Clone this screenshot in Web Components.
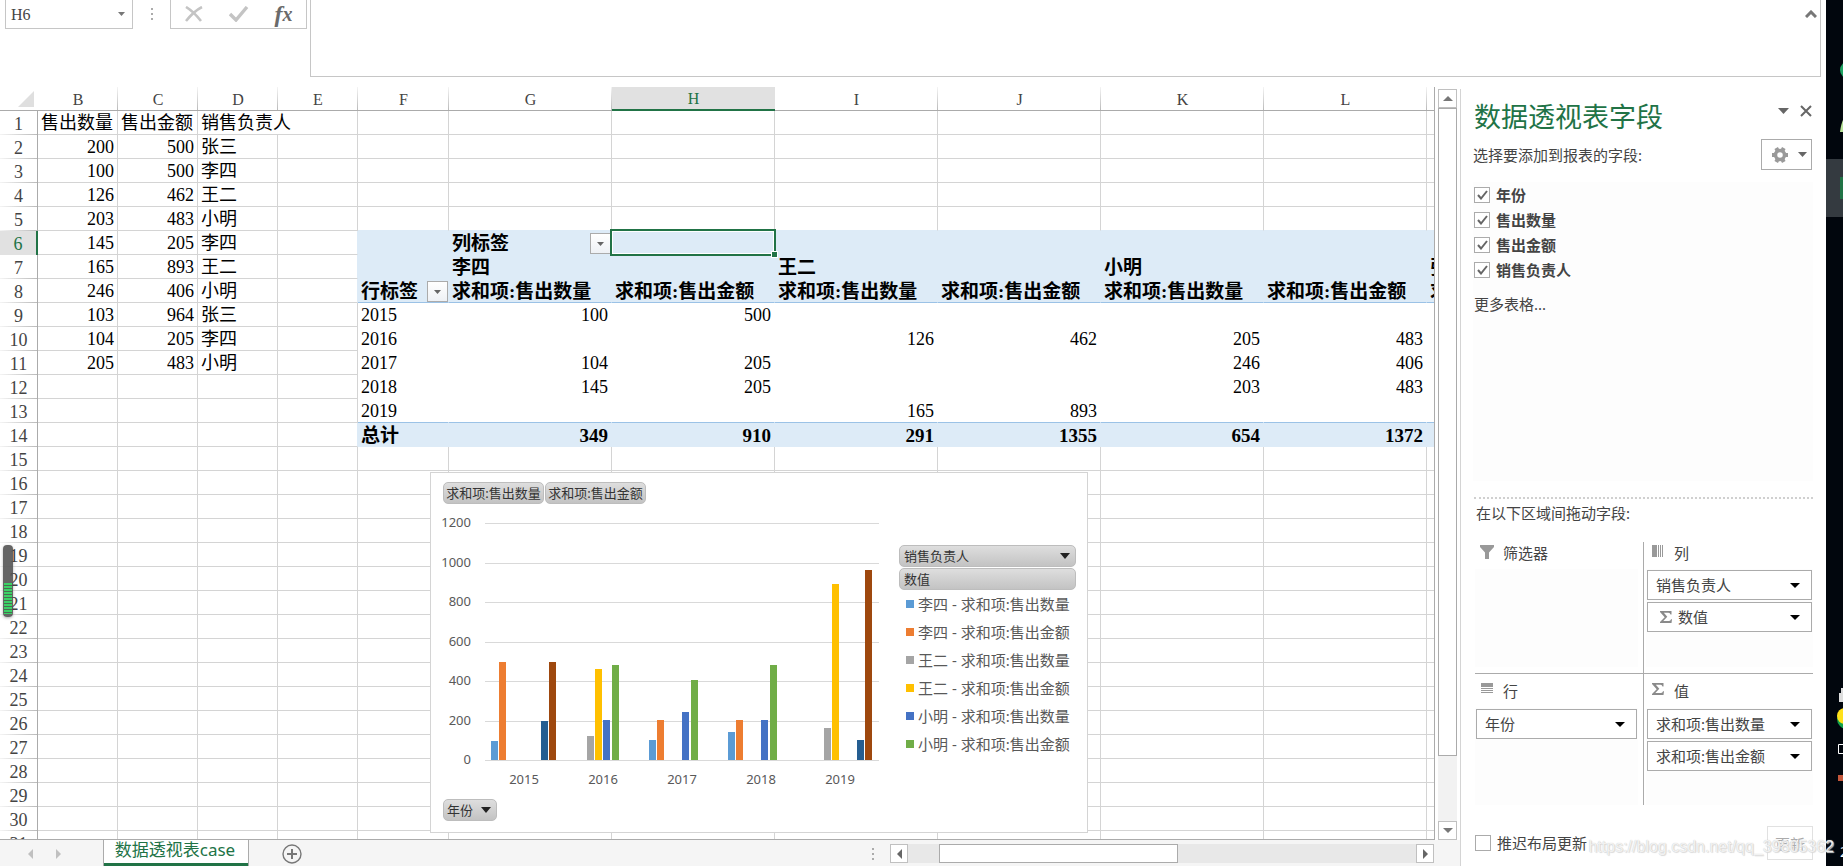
<!DOCTYPE html>
<html lang="zh-CN">
<head>
<meta charset="utf-8">
<title>数据透视表case</title>
<style>
  html, body { height: 100%; }
  body { margin: 0; overflow: hidden; background: #fff; color: #444; font-family: "Noto Sans", "Noto Sans CJK SC", sans-serif; }
</style>
</head>
<body>
<excel-window></excel-window>
<script>
const CELL_FONT = '"Liberation Serif", "Noto Sans CJK SC", serif';
const RESET = `*{box-sizing:border-box} button,input{font:inherit;color:inherit;margin:0;padding:0;border:0;background:none;border-radius:0} button{display:flex;align-items:center;justify-content:center} svg{display:block;flex:none}`;
const define = (name, html, setup) => customElements.define(name, class extends HTMLElement {
  connectedCallback() {
    if (this.shadowRoot) return;
    const t = document.createElement('template');
    t.innerHTML = `<style>${RESET}</style>` + (typeof html === 'function' ? html(this) : html);
    this.attachShadow({ mode: 'open' }).append(t.content.cloneNode(true));
    if (setup) setup(this);
  }
});
const arrow = (w, h, fill) => `<svg width="${w}" height="${h}" viewBox="0 0 ${w} ${h}" aria-hidden="true"><path d="M0 0H${w}L${w / 2} ${h}Z" fill="${fill}"/></svg>`;

define('excel-window', `
<style>
  :host{display:flex;height:100vh;overflow:hidden}
  .app{flex:1;min-width:0;display:flex;flex-direction:column}
  .work{flex:1;min-height:0;display:flex}
  .book{flex:1;min-width:0;display:flex;flex-direction:column}
  .view{flex:1;min-height:0;display:flex}
</style>
<div class="app">
  <formula-bar></formula-bar>
  <div class="work">
    <div class="book">
      <div class="view"><sheet-grid></sheet-grid><v-scroll></v-scroll></div>
      <sheet-tabs></sheet-tabs>
    </div>
    <fields-pane></fields-pane>
  </div>
</div>
<desktop-edge></desktop-edge>
<level-meter></level-meter>`);

define('formula-bar', `
<style>
  :host{display:flex;height:87px;padding:0 5px 10px 5px;flex:none}
  .name{display:flex;width:128px;height:29px;border:1px solid #c6c6c6;border-top:0}
  .name input{flex:1;min-width:0;padding:2px 0 0 5px;font:16px/26px ${CELL_FONT};color:#444;outline:0}
  .name button{width:22px;height:28px}
  .dots{width:37px;height:28px;display:flex;align-items:center;justify-content:center}
  .tools{display:flex;width:137px;height:29px;border:1px solid #c6c6c6;border-top:0}
  .tools button{flex:1;height:28px}
  .fx{font:italic bold 24px/28px "Liberation Serif",serif;color:#6a6a6a}
  .fx span{font-size:20px}
  .formula{flex:1;margin-left:3px;border:1px solid #c6c6c6;border-top:0;display:flex}
  textarea{flex:1;border:0;resize:none;outline:0;background:none;font:16px/20px ${CELL_FONT}}
  .formula button{width:19px;height:28px}
</style>
<div class="name"><input aria-label="名称框" value="H6"><button aria-label="名称列表">${arrow(7, 4, '#777')}</button></div>
<div class="dots"><svg width="2" height="12"><path d="M0 0h2v2H0zM0 5h2v2H0zM0 10h2v2H0z" fill="#ababab"/></svg></div>
<div class="tools">
  <button aria-label="取消"><svg width="18" height="16" viewBox="0 0 18 16"><path d="M1 1C6 4 12 10 16 15M17 1C11 4 5 10 1 15" fill="none" stroke="#c4c4c4" stroke-width="2.6"/></svg></button>
  <button aria-label="输入"><svg width="20" height="16" viewBox="0 0 20 16"><path d="M1 8L7 14L18 1" fill="none" stroke="#c4c4c4" stroke-width="3.4"/></svg></button>
  <button class="fx" aria-label="插入函数">f<span>x</span></button>
</div>
<div class="formula"><textarea aria-label="编辑栏"></textarea><button aria-label="折叠编辑栏"><svg width="12" height="8" viewBox="0 0 12 8"><path d="M1 7L6 2L11 7" fill="none" stroke="#777" stroke-width="3"/></svg></button></div>`);

const COLS = ['B', 'C', 'D', 'E', 'F', 'G', 'H', 'I', 'J', 'K', 'L', 'M'];
const QTY = '求和项:售出数量', AMT = '求和项:售出金额';
const CELLS = {
  1: { B: '售出数量', C: '售出金额', D: '销售负责人' },
  6: { F: '', G: '列标签' },
  7: { G: '李四', I: '王二', K: '小明', M: '张三' },
  8: { F: '行标签', G: QTY, H: AMT, I: QTY, J: AMT, K: QTY, L: AMT, M: QTY },
  9: { F: '2015', G: 100, H: 500 },
  10: { F: '2016', I: 126, J: 462, K: 205, L: 483 },
  11: { F: '2017', G: 104, H: 205, K: 246, L: 406 },
  12: { F: '2018', G: 145, H: 205, K: 203, L: 483 },
  13: { F: '2019', I: 165, J: 893 },
  14: { F: '总计', G: 349, H: 910, I: 291, J: 1355, K: 654, L: 1372 }
};
[[200, 500, '张三'], [100, 500, '李四'], [126, 462, '王二'], [203, 483, '小明'], [145, 205, '李四'], [165, 893, '王二'], [246, 406, '小明'], [103, 964, '张三'], [104, 205, '李四'], [205, 483, '小明']]
  .forEach(([b, c, d], i) => { CELLS[i + 2] = { B: b, C: c, D: d, ...CELLS[i + 2] }; });

function gridRows() {
  let out = '';
  for (let r = 1; r <= 31; r++) {
    out += `<tr><th scope="row"${r === 6 ? ' class="on"' : ''}>${r}</th>`;
    for (const c of COLS) {
      if (r === 1 && c === 'E') continue;
      const v = (CELLS[r] || {})[c] ?? '';
      const cls = [];
      if (typeof v === 'number') cls.push('n');
      const pivot = c >= 'F' && r >= 6 && r <= 14;
      if (pivot) cls.push(r <= 8 || r === 14 ? 'hd' : 'pv');
      if (pivot && (r === 8 || r === 13)) cls.push('rule');
      if (c >= 'F' && r === 5) cls.push('bb');
      if (c === 'E' && (r >= 6 && r <= 8 || r === 14)) cls.push('br');
      let extra = '';
      if ((r === 6 && c === 'G') || (r === 8 && c === 'F')) extra = `<button aria-label="筛选">${arrow(7, 4, '#666')}</button>`;
      if (r === 6 && c === 'H') extra = '<i class="sel"></i>';
      out += `<td class="${cls.join(' ')}"${r === 1 && c === 'D' ? ' colspan="2"' : ''}>${v}${extra}</td>`;
    }
    out += '</tr>';
  }
  return out;
}

define('sheet-grid', () => `
<style>
  :host{display:block;position:relative;flex:1;min-width:0;overflow:hidden;border-right:1px solid #ababab;border-bottom:1px solid #ababab}
  table{table-layout:fixed;width:1590px;border-collapse:separate;border-spacing:0;font:18px/21px ${CELL_FONT};color:#000}
  td,th{height:24px;padding:2px 3px 0;font-weight:400;white-space:nowrap;overflow:hidden;text-align:left}
  td{border-right:1px solid #d4d4d4;border-bottom:1px solid #d4d4d4}
  .n{text-align:right}
  .hd{background:#ddebf7;border-color:#ddebf7;font-weight:700;font-size:19px;position:relative;overflow:visible}
  .pv{border-color:#fff}
  .rule{border-bottom-color:#9bc2e6}
  .bb{border-bottom-color:#ddebf7}
  .br{border-right-color:#ddebf7}
  thead th{font-size:16px;text-align:center;color:#444;border-bottom:1px solid #ababab;background:linear-gradient(#f4f4f4,#bbb) right/1px 100% no-repeat}
  thead th.on{background:#e1e1e1;color:#217346;border-bottom:2px solid #217346;line-height:20px}
  tbody th{text-align:center;color:#444;border-right:1px solid #ababab;background:linear-gradient(90deg,#f4f4f4,#bbb) bottom/100% 1px no-repeat}
  tbody th.on{background:#e1e1e1;color:#217346;border-right:2px solid #217346}
  thead th.corner{padding:0;background:none;}
  .corner svg{margin-left:18px}
  .hd button{position:absolute;right:0;top:2px;width:21px;height:21px;border:1px solid #ababab;background:linear-gradient(#fff,#eef1f5)}
  .sel{position:absolute;inset:-2px;border:2px solid #217346;box-shadow:inset 0 0 0 1px #fff;z-index:1}
  .sel::after{content:"";position:absolute;right:-3px;bottom:-3px;width:5px;height:5px;background:#217346;box-shadow:0 0 0 1px #fff}
  pivot-chart{position:absolute;left:430px;top:385px}
</style>
<table>
  <colgroup><col style="width:38px">${'<col style="width:80px">'.repeat(4)}<col style="width:91px">${'<col style="width:163px">'.repeat(7)}</colgroup>
  <thead><tr><th class="corner" aria-label="全选"><svg width="16" height="16"><path d="M16 0V16H0Z" fill="#dfdfdf"/></svg></th>${COLS.map(c => `<th scope="col" aria-label="${c}"${c === 'H' ? ' class="on"' : ''}>${c === 'M' ? '' : c}</th>`).join('')}</tr></thead>
  <tbody>${gridRows()}</tbody>
</table>
<pivot-chart></pivot-chart>`);

const SERIES = [
  ['李四 - ' + QTY, '#5b9bd5', [100, 0, 104, 145, 0]],
  ['李四 - ' + AMT, '#ed7d31', [500, 0, 205, 205, 0]],
  ['王二 - ' + QTY, '#a5a5a5', [0, 126, 0, 0, 165]],
  ['王二 - ' + AMT, '#ffc000', [0, 462, 0, 0, 893]],
  ['小明 - ' + QTY, '#4472c4', [0, 205, 246, 203, 0]],
  ['小明 - ' + AMT, '#70ad47', [0, 483, 406, 483, 0]],
  ['张三 - ' + QTY, '#255e91', [200, 0, 0, 0, 103]],
  ['张三 - ' + AMT, '#9e480e', [500, 0, 0, 0, 964]]
];
function plot() {
  const x0 = 49, base = 252, px = 237 / 1200, cat = 79;
  let s = '';
  for (let v = 0; v <= 1200; v += 200) {
    const y = Math.round(base - v * px);
    s += `<path d="M${x0} ${y}.5h394" stroke="#d9d9d9"/><text x="35" y="${y + 4}" text-anchor="end">${v}</text>`;
  }
  for (let i = 0; i < 5; i++) {
    SERIES.forEach(([, color, d], k) => {
      if (!d[i]) return;
      const h = Math.floor(d[i] * px);
      s += `<rect x="${Math.round(x0 + i * cat + 6 + k * 8.3)}" y="${base - h}" width="7" height="${h}" fill="${color}"/>`;
    });
    s += `<text x="${x0 + 39 + i * cat}" y="276" text-anchor="middle">${2015 + i}</text>`;
  }
  return s;
}
define('pivot-chart', () => `
<style>
  :host{display:grid;grid-template-columns:457px 177px;justify-content:start;gap:6px;width:658px;height:361px;padding:9px 5px;background:#fff;border:1px solid #d4d4d4;font-size:13px;color:#333}
  button{height:22px;padding:0 4px;border:1px solid #bdbdbd;border-radius:5px;background:linear-gradient(#dedede,#c3c3c3);line-height:20px;white-space:nowrap}
  .row{display:flex;gap:1px;padding-left:7px}
  .row button{width:101px}
  .row .year{width:54px;gap:8px;padding:0 6px 0 4px}
  .plot{margin:4px 0 6px}
  text{font:13px "Noto Sans",sans-serif;fill:#595959}
  .legend{padding-top:63px}
  .legend button{width:100%;justify-content:space-between;padding:0 5px 0 4px;margin-bottom:1px}
  ul{list-style:none;margin:0;padding:0 0 0 7px;font-size:15px;line-height:24px;color:#595959}
  li{display:flex;align-items:center;gap:4px;height:28px;padding-bottom:3px;white-space:nowrap}
  li i{width:8px;height:8px;flex:none}
</style>
<div>
  <div class="row"><button>${QTY}</button><button>${AMT}</button></div>
  <svg class="plot" width="455" height="285" role="img" aria-label="数据透视图">${plot()}</svg>
  <div class="row"><button class="year">年份${arrow(10, 6, '#222')}</button></div>
</div>
<div class="legend">
  <button>销售负责人${arrow(10, 6, '#222')}</button><button>数值</button>
  <ul>${SERIES.slice(0, 6).map(([n, c]) => `<li><i style="background:${c}"></i>${n}</li>`).join('')}</ul>
</div>`);

define('v-scroll', `
<style>
  :host{display:flex;flex-direction:column;width:19px;margin:2px 3px 0 3px;background:#f2f2f2}
  button{height:19px;border:1px solid #c0c0c0;background:#fff}
  .thumb{flex:1;border:1px solid #ababab;background:#fff}
  .track{height:65px}
</style>
<button aria-label="向上"><svg width="10" height="5"><path d="M0 5H10L5 0Z" fill="#777"/></svg></button>
<div class="thumb"></div><div class="track"></div>
<button aria-label="向下">${arrow(10, 5, '#777')}</button>`);

define('sheet-tabs', `
<style>
  :host{display:flex;height:26px;flex:none;background:#f5f5f5}
  .nav{display:flex;width:103px;padding-left:16px}
  .nav button{width:28px;height:28px}
  .tab{width:146px;height:26px;background:#fff;border:solid #ababab;border-width:0 1px;box-shadow:inset 0 -3px #217346;color:#217346;font-size:17px;line-height:20px;padding:0 2px 6px 0}
  .add{margin:4px 0 0 33px;width:20px;height:20px}
  .gap{flex:1}
  .dots{margin:8px 16px 0 0}
  .bar{display:flex;width:544px;height:19px;margin:4px 26px 0 0;background:#e8e8e8}
  .bar button{width:18px;border:1px solid #c0c0c0;background:#fff}
  .thumb{width:239px;margin-left:31px;border:1px solid #ababab;background:#fff}
</style>
<div class="nav"><button aria-label="上一张"><svg width="5" height="10"><path d="M5 0V10L0 5Z" fill="#c0c0c0"/></svg></button><button aria-label="下一张"><svg width="5" height="10"><path d="M0 0V10L5 5Z" fill="#c0c0c0"/></svg></button></div>
<button class="tab">数据透视表case</button>
<button class="add" aria-label="新工作表"><svg width="20" height="20"><circle cx="10" cy="10" r="9" fill="none" stroke="#777" stroke-width="1.4"/><path d="M10 5V15M5 10H15" stroke="#777" stroke-width="2"/></svg></button>
<div class="gap"></div>
<svg class="dots" width="2" height="12"><path d="M0 0h2v2H0zM0 5h2v2H0zM0 10h2v2H0z" fill="#ababab"/></svg>
<div class="bar"><button aria-label="向左"><svg width="5" height="10"><path d="M5 0V10L0 5Z" fill="#666"/></svg></button><div class="thumb"></div><div class="gap"></div><button aria-label="向右"><svg width="5" height="10"><path d="M0 0V10L5 5Z" fill="#666"/></svg></button></div>`);

define('field-chip', `
<style>
  :host{display:block}
  button{width:100%;height:30px;justify-content:space-between;border:1px solid #ababab;background:#fff;padding:0 11px 0 8px;font-size:15px;line-height:28px;white-space:nowrap}
  span{display:flex;align-items:center;gap:6px}
  ::slotted(svg){margin-left:4px}
</style>
<button aria-haspopup="menu"><span><slot></slot></span>${arrow(10, 5, '#000')}</button>`);

define('field-zone', el => `
<style>
  :host{display:flex;flex-direction:column}
  h3{display:flex;align-items:center;gap:8px;margin:0;height:22px;padding-left:4px;font-size:15px;font-weight:400;line-height:22px}
  h3 b{width:16px;height:16px;display:flex;justify-content:center}
  .body{display:flex;flex-direction:column;gap:2px;height:98px;margin-top:5px;padding:1px;background:#fdfdfd}
  :host(.low) h3{margin-top:6px}
  :host(.low) .body{margin-top:6px}
</style>
<h3><b><slot name="icon"></slot></b>${el.getAttribute('label')}</h3><div class="body"><slot></slot></div>`);

const SIGMA = slot => `<svg ${slot} width="12" height="12" viewBox="0 0 12 12"><path d="M0 0H11.500V3.500H10.500Q10.200 1.800 8.500 1.800H3.800L7.300 5.700L3.300 10H9Q10.700 10 11 8.300H12L11.500 12H0V11L4.700 6.200L0 1Z" fill="#8a8a8a"/></svg>`;

define('check-row', el => `
<style>
  :host{display:block}
  label{display:flex;align-items:center;gap:6px;height:25px;font-size:15px;line-height:22px;white-space:nowrap}
  .box{position:relative;width:16px;height:16px}
  input{appearance:none;display:block;width:16px;height:16px;border:1px solid #ababab;background:#fff}
  svg{display:none;position:absolute;left:3px;top:3px;pointer-events:none}
  input:checked + svg{display:block}
</style>
<label><span class="box"><input type="checkbox"${el.hasAttribute('checked') ? ' checked' : ''}><svg width="11" height="10"><path d="M1 5L4 8.500L10 1" fill="none" stroke="#666" stroke-width="2"/></svg></span><slot></slot></label>`);

define('fields-pane', `
<style>
  :host{display:flex;flex-direction:column;position:relative;width:366px;margin-top:2px;padding:8px 13px 5px 12px;border-left:1px solid #d4d4d4;flex:none}
  header{display:flex;justify-content:space-between}
  h2{margin:0 0 0 1px;font-size:27px;line-height:40px;font-weight:400;color:#217346}
  .ctl{display:flex;gap:11px;padding:6px 1px 0 0;height:21px}
  .pick{display:flex;justify-content:space-between;align-items:center;margin-top:2px;height:31px;font-size:15px;line-height:22px}
  .gear{width:51px;height:31px;border:1px solid #ababab;gap:10px;padding-left:5px;margin-right:1px}
  .list{flex:1;margin-top:12px;padding-left:1px;background:#fdfdfd;font-weight:700}
  .list a{display:block;margin-top:11px;font-size:15px;line-height:22px;font-weight:400;color:#444;text-decoration:none}
  .drag{margin:16px 0 0 1px;padding:3px 2px 0;border-top:2px dotted #d0d0d0;font-size:15px;line-height:22px}
  .zones{display:grid;grid-template-columns:163px 167px;column-gap:8px;margin:18px 0 0 2px;
    background:linear-gradient(#ababab,#ababab) 168px 0/1px 100% no-repeat,linear-gradient(#ababab,#ababab) 0 131px/100% 1px no-repeat}
  field-zone{height:131px}
  .low{margin-top:1px}
  footer{display:flex;justify-content:space-between;align-items:center;margin:20px 0 0 2px;height:36px}
  footer button{width:46px;height:34px;border:1px solid #e1e1e1;color:#ababab;font-size:15px}
  .mark{position:absolute;right:-8px;bottom:8px;font:16px/22px "Liberation Sans",sans-serif;color:rgba(255,255,255,.8);text-shadow:0 0 1px #bbb,1px 1px 1px #ddd;white-space:nowrap}
</style>
<header><h2>数据透视表字段</h2><div class="ctl"><button aria-label="任务窗格选项">${arrow(11, 6, '#666')}</button><button aria-label="关闭"><svg width="12" height="12"><path d="M1 1L11 11M11 1L1 11" stroke="#666" stroke-width="2"/></svg></button></div></header>
<div class="pick"><span>选择要添加到报表的字段:</span><button class="gear" aria-label="工具"><svg width="16" height="16" viewBox="0 0 16 16"><path d="M0 8H16M4.200 1L11.800 15M11.800 1L4.200 15" stroke="#9a9a9a" stroke-width="4"/><circle cx="8" cy="8" r="4.500" fill="#fff" stroke="#9a9a9a" stroke-width="3.500"/></svg>${arrow(9, 5, '#666')}</button></div>
<div class="list">
  <check-row checked>年份</check-row><check-row checked>售出数量</check-row><check-row checked>售出金额</check-row><check-row checked>销售负责人</check-row>
  <a href="#">更多表格...</a>
</div>
<div class="drag">在以下区域间拖动字段:</div>
<div class="zones">
  <field-zone label="筛选器"><svg slot="icon" width="14" height="14"><path d="M0 0H14V2L9 7.500V14H5V7.500L0 2Z" fill="#999"/></svg></field-zone>
  <field-zone label="列"><svg slot="icon" width="12" height="12"><path d="M0 0H5V12H0ZM6 0H7V12H6ZM8 0H9V12H8ZM10 0H11V12H10Z" fill="#999"/></svg><field-chip>销售负责人</field-chip><field-chip>${SIGMA('')}数值</field-chip></field-zone>
  <field-zone class="low" label="行"><svg slot="icon" width="12" height="12"><path d="M0 0H12V4H0ZM0 5H12V6H0ZM0 7H12V8H0ZM0 9H12V10H0Z" fill="#999"/></svg><field-chip>年份</field-chip></field-zone>
  <field-zone class="low" label="值">${SIGMA('slot="icon"')}<field-chip>${QTY}</field-chip><field-chip>${AMT}</field-chip></field-zone>
</div>
<footer><check-row>推迟布局更新</check-row><button disabled>更新</button></footer>
<div class="mark">https://blog.csdn.net/qq_39805362</div>`);

define('desktop-edge', `
<style>
  :host{display:flex;flex-direction:column;justify-content:space-between;width:17px;flex:none;overflow:hidden;background:#01060d;color:#fff}
  .clock{font:15px/18px "Noto Sans",sans-serif;padding-left:14px;height:24px;white-space:nowrap;overflow:hidden}
</style>
<svg width="17" height="220"><path d="M0 159H17V217H0Z" fill="#343a40"/><circle cx="23" cy="70" r="9" fill="#1fa463"/><path d="M14 132Q15 124 17 120V132Z" fill="#b9e29a"/><path d="M14 177H17V199H14Z" fill="#217346"/></svg>
<div><svg width="17" height="164"><path d="M13 15H17V24H13ZM15 10H17V15H15Z" fill="#ddd"/><circle cx="21" cy="41" r="10" fill="#12a14b"/><circle cx="19" cy="38" r="8" fill="#ffe11a"/><path d="M17 66.500H12.500V75.500H17" fill="none" stroke="#fff"/><path d="M12 97H17V103H12Z" fill="#c4573b"/></svg><div class="clock">2</div></div>`);

define('level-meter', `
<style>
  :host{position:absolute;left:3px;top:545px;width:10px;height:72px;border-radius:4px;background:rgba(80,80,80,.88);box-shadow:0 1px 3px rgba(0,0,0,.3)}
  i{position:absolute;left:1px;right:1px;top:38px;bottom:3px;background:repeating-linear-gradient(#3bd166 0 2px,#4b6b52 2px 3px)}
</style><i></i>`);
</script>
</body>
</html>
